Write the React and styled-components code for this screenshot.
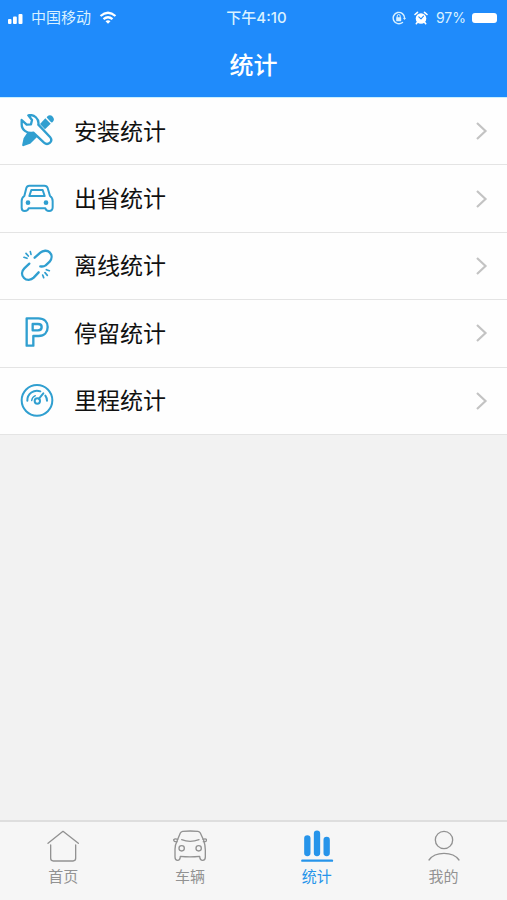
import React from "react";
import styled, { createGlobalStyle } from "styled-components";

const GlobalStyle = createGlobalStyle`
  * { box-sizing: border-box; }
  body {
    margin: 0;
    background: #f2f2f2;
    font-family: "Liberation Sans", "Noto Sans CJK SC", sans-serif;
  }
`;

const Page = styled.div`
  min-height: 100vh;
  display: flex;
  flex-direction: column;
`;

const Header = styled.header`
  background: #1f8bfb;
  color: #fff;
  border-bottom: 1px solid #c9effe;
`;

const StatusBar = styled.div`
  display: grid;
  grid-template-columns: 1fr auto 1fr;
  align-items: center;
  height: 36px;
  padding: 0 10px 0 8px;
  font-family: Inter, "Noto Sans CJK SC", sans-serif;
  font-size: 15px;
  line-height: 20px;
  color: #d9f1ff;
`;

const StatusGroup = styled.div`
  display: flex;
  align-items: center;
  justify-content: ${(p) => (p.$end ? "flex-end" : "flex-start")};
  gap: 8px;
`;

const Time = styled.time`
  padding-left: 8px;
  font-size: 15px;
  font-weight: 500;
`;

const Battery = styled.span`
  width: 25px;
  height: 10px;
  border-radius: 3px;
  background: #fff;
`;

const Percent = styled.span`
  font-size: 14px;
  margin-right: -2px;
`;

const Title = styled.h1`
  margin: 0;
  height: 61px;
  padding-top: 12px;
  text-align: center;
  font-size: 24px;
  line-height: 36px;
  font-weight: 500;
`;

const List = styled.ul`
  list-style: none;
  margin: 0;
  padding: 0;
  min-height: 337px;
  display: grid;
  grid-auto-rows: 1fr;
  background: #fefefe;
`;

const Item = styled.li`
  display: flex;
  border-bottom: 1px solid #e4e4e4;
`;

const Row = styled.a`
  flex: 1;
  display: flex;
  align-items: center;
  gap: 20px;
  padding: 0 19px 0 20px;
  color: #111;
  text-decoration: none;
  font-size: 23px;
  line-height: 32px;
`;

const RowLabel = styled.span`
  flex: 1;
  padding-top: 1px;
`;

const Main = styled.main`
  flex: 1;
`;

const TabBar = styled.nav`
  display: grid;
  grid-template-columns: repeat(4, 1fr);
  background: #f6f6f6;
  border-top: 2px solid #dedede;
`;

const Tab = styled.a`
  display: flex;
  flex-direction: column;
  align-items: center;
  gap: 3px;
  padding: 7px 0 12px;
  color: ${(p) => (p.$active ? "#2694ea" : "#929292")};
  text-decoration: none;
  font-size: 15px;
  line-height: 22px;
`;

const Icon = styled.svg`
  display: block;
  flex: none;
  fill: none;
  stroke-linecap: round;
  stroke-linejoin: round;
`;

const RowIcon = ({ children }) => (
  <Icon width="34" height="34" viewBox="0 0 102 102" stroke="#309fd0" strokeWidth="7" aria-hidden="true">
    {children}
  </Icon>
);

const TabIcon = ({ children }) => (
  <Icon width="34" height="34" viewBox="0 0 102 102" stroke="currentColor" strokeWidth="4" aria-hidden="true">
    {children}
  </Icon>
);

const rows = [
  {
    label: "安装统计",
    icon: (
      <>
        <path d="M26 56 L14 74 L10 93 L29 86 L48 67 L36 55 Z" fill="#309fd0" />
        <path d="M60 30 L76 13 L92 29 L75 46 Z" fill="#309fd0" stroke="none" />
        <path d="M84 10 Q90 5 96 11 Q101 17 95 22 Z" fill="#309fd0" />
        <path
          d="M25 4 C42 0 58 14 55 32 L90 69 Q98 78 90 86 Q81 94 72 86 L40 56 C22 60 5 48 5 31 L5 18 L20 32 L33 31 L36 18 Z"
          fill="#fefefe"
        />
      </>
    ),
  },
  {
    label: "出省统计",
    icon: (
      <>
        <path d="M28 11 H73 Q81 11 83 18 L90 42 Q98 47 98 57 V76 Q98 87 87 87 Q78 87 76 79 H26 Q24 87 14 87 Q5 87 5 77 V57 Q5 47 13 42 L19 18 Q21 11 28 11 Z" strokeWidth="6" />
        <path d="M34 24 H68 L74 42 H28 Z" strokeWidth="6" />
        <circle cx="24" cy="62" r="7" fill="#309fd0" stroke="none" />
        <circle cx="78" cy="62" r="7" fill="#309fd0" stroke="none" />
      </>
    ),
  },
  {
    label: "离线统计",
    icon: (
      <>
        <path d="M44 26 L61 11 C69 4 82 3 89 10 C97 18 96 30 89 38 L77 49 Q70 54 61 52" />
        <path d="M28 44 L13 58 C4 67 4 79 12 87 C20 95 33 94 41 86 L56 70" />
        <path d="M31 8 L33 16 M18 13 L25 21 M12 25 L21 28 M68 78 L71 86 M75 71 L82 79 M79 62 L88 65" strokeWidth="5" />
      </>
    ),
  },
  {
    label: "停留统计",
    icon: (
      <>
        <path d="M20 7 H55 C73 7 83 18 83 33 C83 49 73 60 56 60 H40 V89 H20 Z" />
        <path d="M38 24 H54 C62 24 65 28 65 33 C65 39 62 43 54 43 H38 Z" />
      </>
    ),
  },
  {
    label: "里程统计",
    icon: (
      <>
        <circle cx="51" cy="49" r="46" strokeWidth="6" />
        <path d="M22 50 A29 29 0 0 1 61 22" strokeWidth="6" />
        <path d="M76 35 Q81 42 81 50" strokeWidth="6" />
        <path d="M35 50 A18 18 0 0 1 46 35" strokeWidth="4" />
        <circle cx="52" cy="51" r="8" strokeWidth="6" />
        <path d="M57 44 L70 28" strokeWidth="6" />
      </>
    ),
  },
];

const tabs = [
  {
    label: "首页",
    icon: (
      <>
        <path d="M6 43 L51 7 L97 43" />
        <path d="M14 48 V88 Q14 96 22 96 H81 Q89 96 89 88 V48" />
      </>
    ),
  },
  {
    label: "车辆",
    icon: (
      <>
        <path d="M29 7 Q51 5 75 7 Q80 8 82 12 L92 34 Q97 49 97 63 V84 Q97 94 89 94 Q81 94 80 82 Q51 85 22 82 Q21 94 14 94 Q6 94 6 84 V61 Q6 47 13 34 L22 12 Q24 8 29 7 Z" />
        <path d="M26 32 Q51 42 78 32 M12 38 Q2 39 2 32 Q6 28 14 31 M91 38 Q101 39 101 32 Q98 28 90 31" />
        <circle cx="26" cy="58" r="8" />
        <circle cx="77" cy="58" r="8" />
      </>
    ),
  },
  {
    label: "统计",
    active: true,
    icon: (
      <>
        <path d="M22 28 V72 M51 14 V72 M80 33 V72" strokeWidth="19" />
        <path d="M7 95 H96" strokeWidth="7" />
      </>
    ),
  },
  {
    label: "我的",
    icon: (
      <>
        <circle cx="51" cy="33" r="26" />
        <path d="M6 93 Q20 73 51 73 Q82 73 96 93" />
      </>
    ),
  },
];

export default function App() {
  return (
    <>
      <GlobalStyle />
      <Page>
        <Header>
          <StatusBar>
            <StatusGroup>
              <Icon width="15" height="12" viewBox="0 0 15 12" aria-hidden="true">
                <g fill="#fff">
                  <rect x="0" y="7" width="3.5" height="5" rx="1" />
                  <rect x="5" y="4.5" width="3.8" height="7.5" rx="1" />
                  <rect x="10.5" y="2" width="4" height="10" rx="1" />
                </g>
              </Icon>
              <span>中国移动</span>
              <Icon width="18" height="14" viewBox="0 0 18 14" stroke="#fff" strokeWidth="2.2" aria-hidden="true">
                <path d="M1.5 5 Q9 -1.5 16.5 5 M4.5 8.2 Q9 4.3 13.5 8.2" strokeLinecap="butt" />
                <path d="M6.5 10.3 Q9 8.3 11.5 10.3 L9 12.8 Z" fill="#fff" stroke="none" />
              </Icon>
            </StatusGroup>
            <Time>下午4:10</Time>
            <StatusGroup $end>
              <Icon width="14" height="14" viewBox="0 0 14 14" stroke="#d9f1ff" strokeWidth="1.4" aria-hidden="true">
                <path d="M10.5 11.5 A5.7 5.7 0 1 1 12.6 7" />
                <path d="M11 7 H14 L12.5 9 Z" fill="#d9f1ff" stroke="none" />
                <rect x="4.2" y="6.2" width="5" height="4" rx="0.5" fill="#d9f1ff" stroke="none" />
                <path d="M5.2 6.5 V5 A1.5 1.5 0 0 1 8.2 5 V6.5" strokeWidth="1" />
              </Icon>
              <Icon width="14" height="14" viewBox="0 0 14 14" aria-hidden="true">
                <circle cx="7" cy="7.5" r="5.3" fill="#fff" />
                <path d="M1 3.5 L3.5 1.3 M13 3.5 L10.5 1.3 M3.2 11.5 L2.3 12.7 M10.8 11.5 L11.7 12.7" stroke="#fff" strokeWidth="1.6" />
                <path d="M4.8 5.8 L7 7.8 L9.5 5.2" stroke="#1f8bfb" strokeWidth="1.1" />
              </Icon>
              <Percent>97%</Percent>
              <Battery role="img" aria-label="电池" />
            </StatusGroup>
          </StatusBar>
          <Title>统计</Title>
        </Header>
        <Main>
          <List>
            {rows.map((row) => (
              <Item key={row.label}>
                <Row href="#">
                  <RowIcon>{row.icon}</RowIcon>
                  <RowLabel>{row.label}</RowLabel>
                  <Icon width="14" height="20" viewBox="0 0 14 20" stroke="#c3c3c3" strokeWidth="2.2" aria-hidden="true">
                    <path d="M3 2 L11.5 10 L3 18" strokeLinecap="butt" strokeLinejoin="miter" />
                  </Icon>
                </Row>
              </Item>
            ))}
          </List>
        </Main>
        <TabBar>
          {tabs.map((tab) => (
            <Tab key={tab.label} href="#" $active={tab.active} aria-current={tab.active ? "page" : undefined}>
              <TabIcon>{tab.icon}</TabIcon>
              <span>{tab.label}</span>
            </Tab>
          ))}
        </TabBar>
      </Page>
    </>
  );
}
